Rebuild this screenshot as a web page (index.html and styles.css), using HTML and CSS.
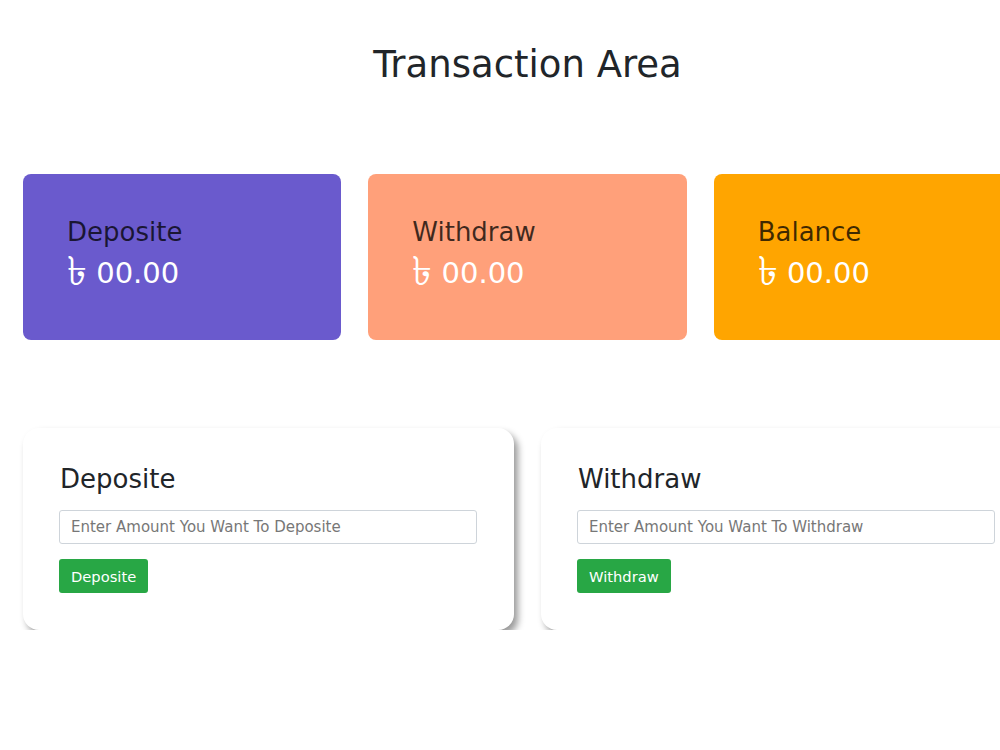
FILE: index.html
```html
<!DOCTYPE html>
<html lang="en">
<head>
  <meta charset="UTF-8" />
  <meta name="viewport" content="width=device-width, initial-scale=1.0" />
  <title>Bank Transaction</title>
  <link rel="stylesheet" href="styles.css">
</head>
<body>

  <section class="area">
    <h1 class="title">Transaction Area</h1>

    <div class="summary">
      <div class="box deposit-box">
        <h4>Deposite</h4>
        <h3><span class="taka">৳</span> <span id="depositTotal">00.00</span></h3>
      </div>
      <div class="box withdraw-box">
        <h4>Withdraw</h4>
        <h3><span class="taka">৳</span> <span id="withdrawTotal">00.00</span></h3>
      </div>
      <div class="box balance-box">
        <h4>Balance</h4>
        <h3><span class="taka">৳</span> <span id="balanceTotal">00.00</span></h3>
      </div>
    </div>

    <div class="forms">
      <div class="form-card">
        <h4>Deposite</h4>
        <input id="depositAmount" type="text" placeholder="Enter Amount You Want To Deposite" />
        <button class="btn" type="button">Deposite</button>
      </div>
      <div class="form-card">
        <h4>Withdraw</h4>
        <input id="withdrawAmount" type="text" placeholder="Enter Amount You Want To Withdraw" />
        <button class="btn" type="button">Withdraw</button>
      </div>
    </div>
  </section>

</body>
</html>
```

FILE: styles.css
```css
body {
  font-family: 'DejaVu Sans', sans-serif;
  background-color: #fff;
  margin: 0;
  padding: 0;
  color: #212529;
  overflow-x: hidden;
}
.area {
  width: 1009px;
  margin-left: 23px;
}
.title {
  text-align: center;
  font-weight: normal;
  font-size: 37px;
  margin: 0;
  padding-top: 43px;
  height: 174px;
  box-sizing: border-box;
}
.summary {
  display: grid;
  grid-template-columns: repeat(3, 1fr);
  gap: 27px;
}
.box {
  height: 166px;
  border-radius: 8px;
  padding: 43px 44px 0;
  box-sizing: border-box;
}
.box h4 {
  margin: 0;
  font-size: 26px;
  font-weight: normal;
  color: rgba(0, 0, 0, 0.75);
}
.box h3 {
  margin: 4px 0 0;
  font-size: 29px;
  font-weight: normal;
  color: #fff;
}
.taka {
  font-size: 40px;
  line-height: 1;
  vertical-align: -2px;
}
.deposit-box {
  background-color: slateblue;
}
.withdraw-box {
  background-color: lightsalmon;
}
.balance-box {
  background-color: orange;
}
.forms {
  display: grid;
  grid-template-columns: 1fr 1fr;
  gap: 27px;
  margin-top: 88px;
}
.form-card {
  background-color: #fff;
  border-radius: 16px;
  padding: 36px 37px 37px 36px;
  box-shadow: 4px 5px 7px rgba(0, 0, 0, 0.4);
}
.form-card h4 {
  margin: 0 0 16px 1px;
  font-size: 26px;
  font-weight: normal;
}
.form-card input {
  display: block;
  width: 100%;
  box-sizing: border-box;
  height: 34px;
  padding: 0 11px;
  border: 1px solid #ced4da;
  border-radius: 3px;
  font-family: inherit;
  font-size: 15px;
  color: #495057;
}
.form-card input::placeholder {
  color: #777;
}
.btn {
  margin-top: 15px;
  height: 34px;
  padding: 0 12px;
  background-color: #28a745;
  color: #fff;
  border: none;
  border-radius: 3px;
  font-family: inherit;
  font-size: 14.7px;
}
```
